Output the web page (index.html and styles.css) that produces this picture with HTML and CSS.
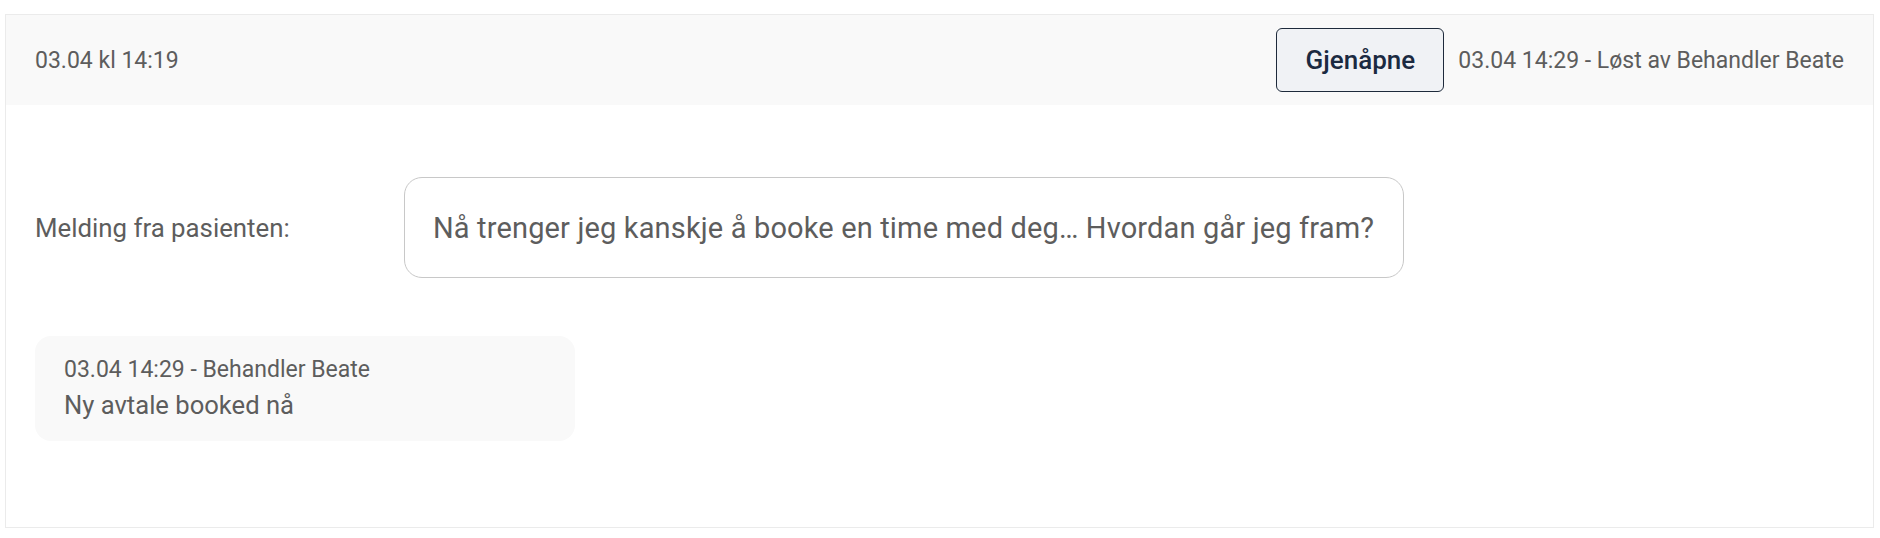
FILE: index.html
```html
<!DOCTYPE html>
<html lang="no">
<head>
<meta charset="utf-8">
<link rel="stylesheet" href="styles.css">
</head>
<body>
<div class="page">
  <section class="card">
    <header class="card-head">
      <span class="date">03.04 kl 14:19</span>
      <div class="head-right">
        <button class="btn-reopen" type="button">Gjenåpne</button>
        <span class="resolved">03.04 14:29 - Løst av Behandler Beate</span>
      </div>
    </header>
    <div class="card-body">
      <div class="msg-row">
        <span class="msg-label">Melding fra pasienten:</span>
        <div class="msg-box">Nå trenger jeg kanskje å booke en time med deg… Hvordan går jeg fram?</div>
      </div>
      <div class="note">
        <div class="note-meta">03.04 14:29 - Behandler Beate</div>
        <div class="note-text">Ny avtale booked nå</div>
      </div>
    </div>
  </section>
</div>
</body>
</html>
```

FILE: styles.css
```css
* { box-sizing: border-box; }
html, body { margin: 0; padding: 0; background: #fff; }
body {
  font-family: Roboto, "Noto Sans", sans-serif;
  color: #5d5d5d;
}
.page {
  padding: 14px 6px 10px 5px;
}
.card {
  border: 1px solid #ebebeb;
  height: 514px;
  display: flex;
  flex-direction: column;
}
.card-head {
  height: 90px;
  background: #f9f9f9;
  display: flex;
  align-items: center;
  justify-content: space-between;
  padding: 0 29px 0 29px;
}
.date, .resolved {
  font-size: 23px;
}
.head-right {
  display: flex;
  align-items: center;
  gap: 14px;
}
.btn-reopen {
  font-family: Roboto, "Noto Sans", sans-serif;
  font-size: 26px;
  font-weight: 500;
  color: #1b2a41;
  background: #f0f2f5;
  border: 1px solid #1e2a3b;
  border-radius: 6px;
  height: 64px;
  width: 168px;
  padding: 0;
}
.card-body {
  padding: 72px 29px 0 29px;
}
.msg-row {
  display: flex;
  align-items: center;
}
.msg-label {
  width: 369px;
  flex: none;
  font-size: 25.8px;
}
.msg-box {
  width: 1000px;
  height: 101px;
  border: 1px solid #c8c8c8;
  border-radius: 18px;
  display: flex;
  align-items: center;
  padding: 0 28px;
  font-size: 29px;
  letter-spacing: 0.15px;
  white-space: nowrap;
}
.note {
  margin-top: 58px;
  width: 540px;
  height: 105px;
  background: #f9f9f9;
  border-radius: 16px;
  padding: 20px 29px 0 29px;
}
.note-meta {
  font-size: 23px;
}
.note-text {
  margin-top: 7px;
  font-size: 25.6px;
}
```
